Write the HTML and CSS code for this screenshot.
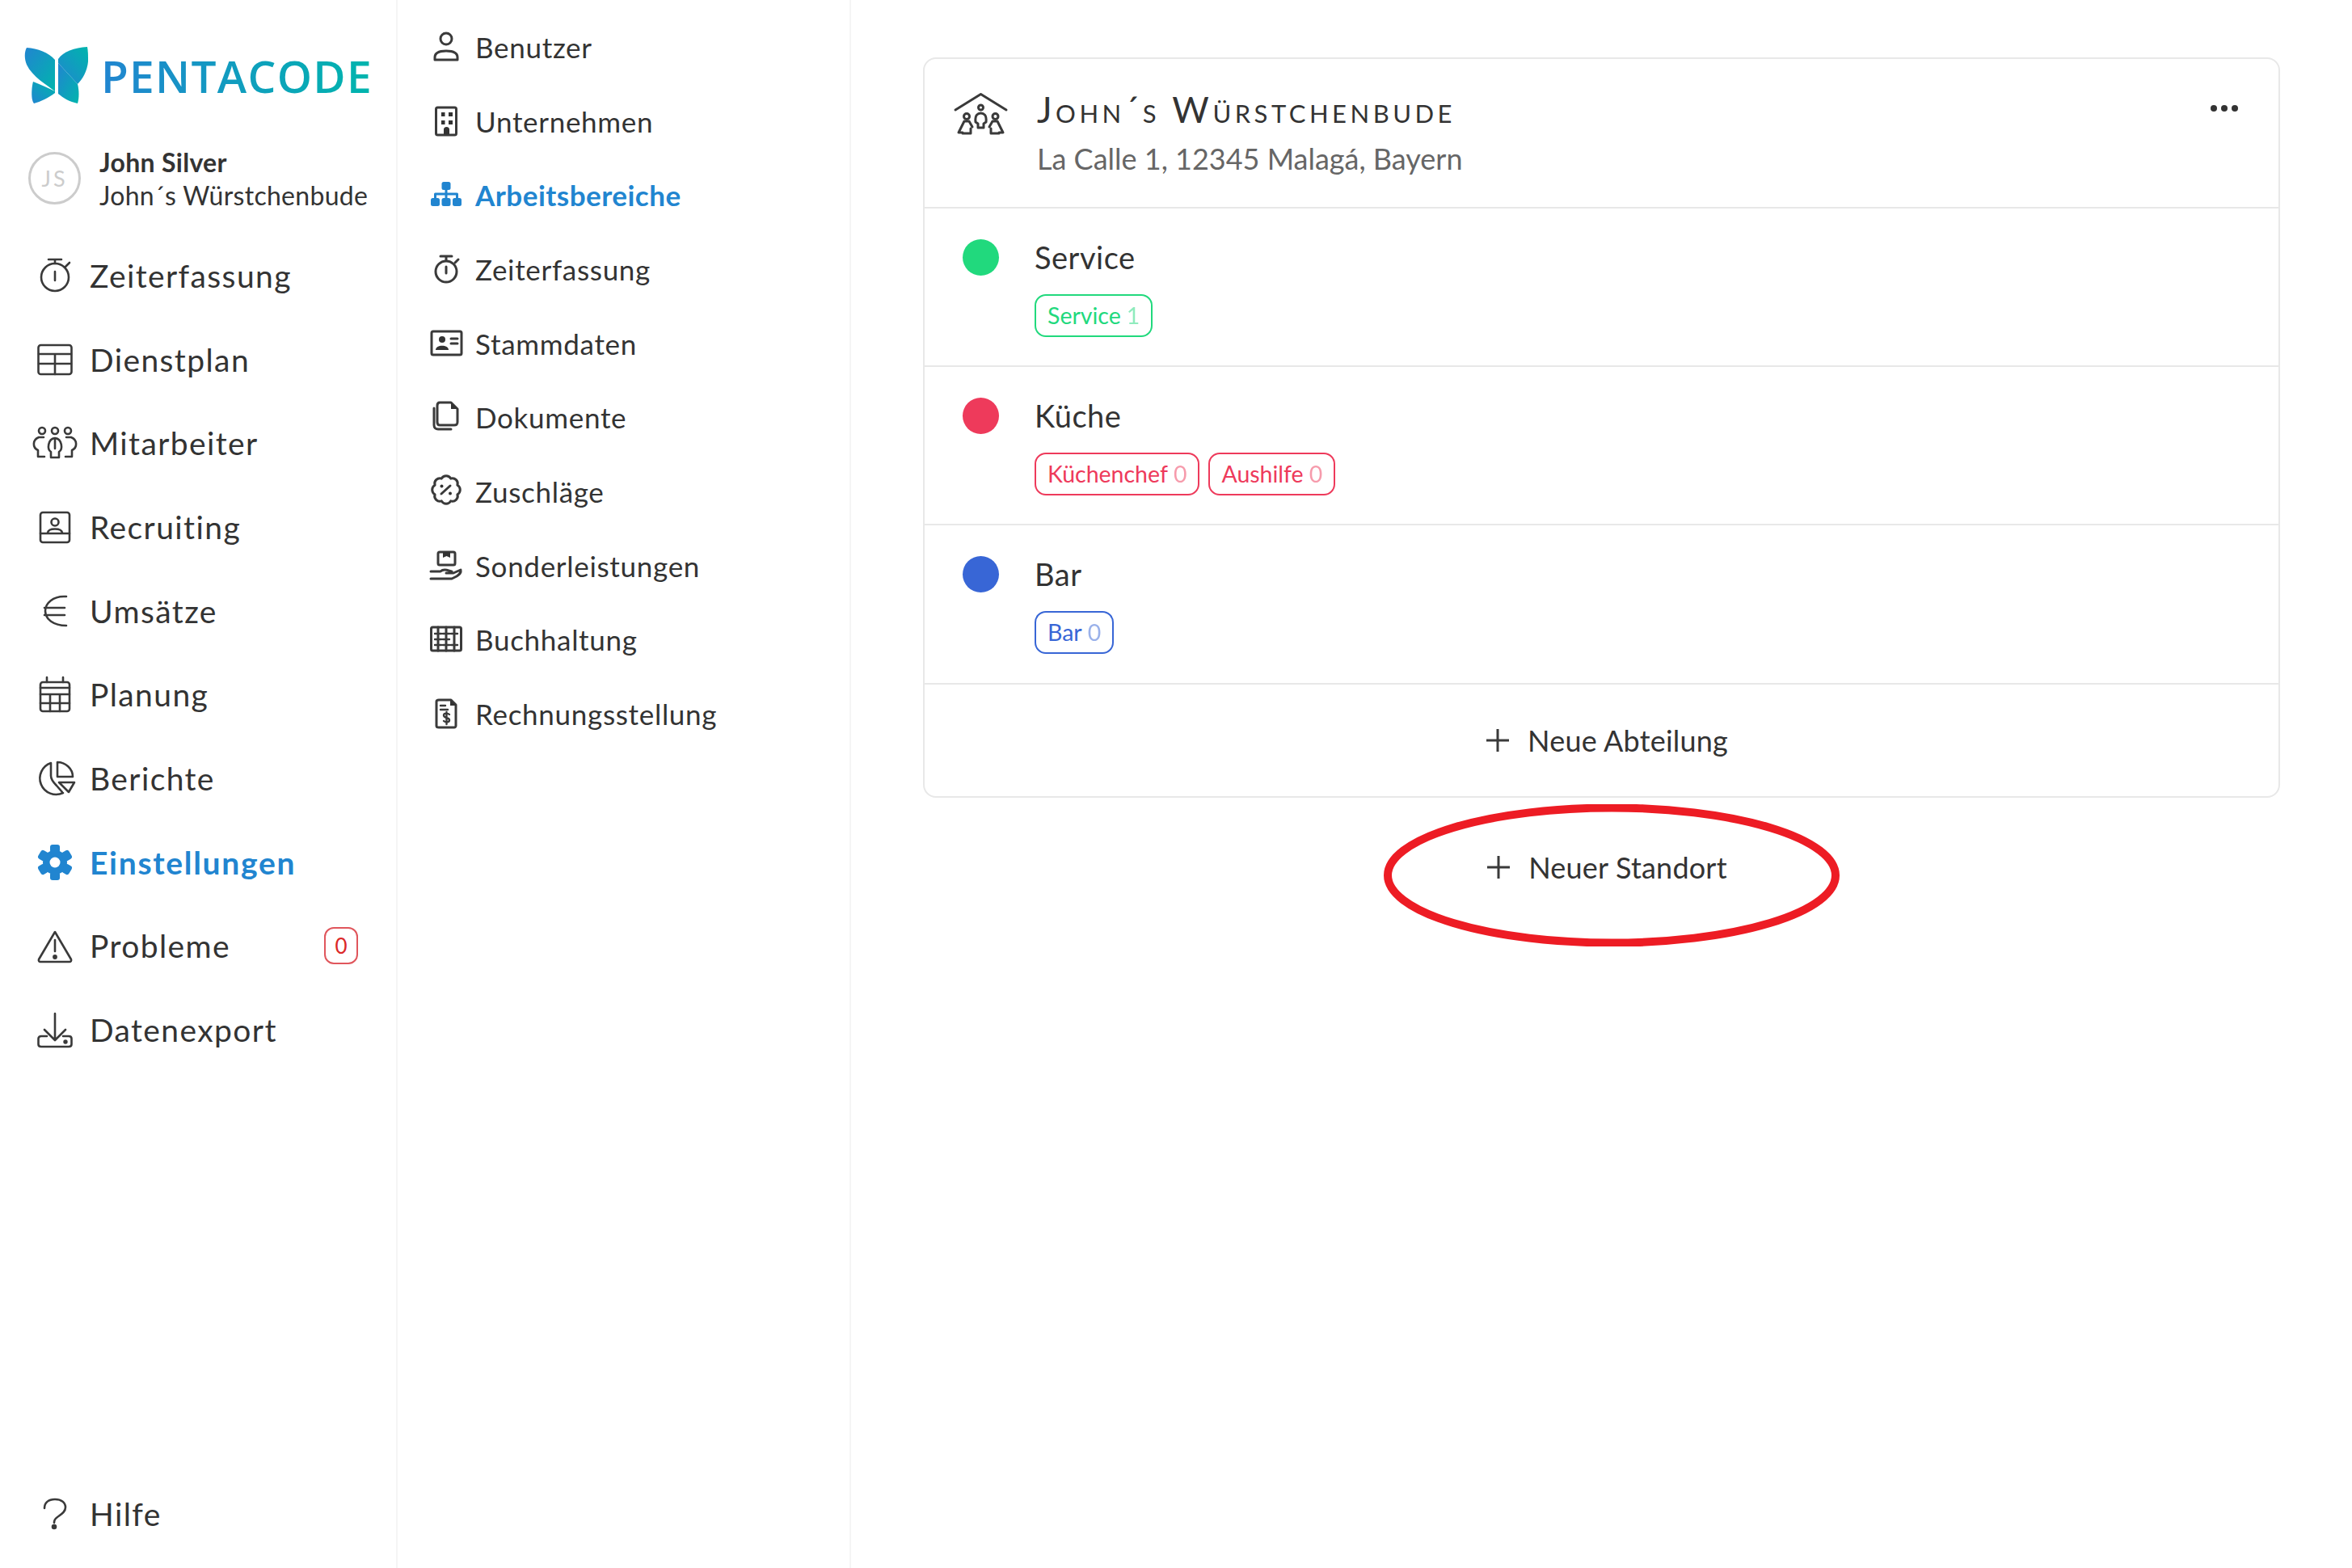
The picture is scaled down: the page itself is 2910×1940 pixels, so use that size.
FILE: index.html
```html
<!DOCTYPE html>
<html lang="de">
<head>
    <meta charset="UTF-8">
    <title>Arbeitsbereiche</title>
    <link rel="stylesheet" href="styles.css">
</head>
<body>

<div class="sidebar">
    <div class="logo">
        <svg class="logo-mark" viewBox="0 0 80 71">
            <defs>
                <linearGradient id="wingA" x1="0" y1="0" x2="1" y2="1">
                    <stop offset="0" stop-color="#2185d0"/>
                    <stop offset="1" stop-color="#00b5ad"/>
                </linearGradient>
                <linearGradient id="wingB" x1="0" y1="1" x2="1" y2="0">
                    <stop offset="0" stop-color="#2185d0"/>
                    <stop offset="1" stop-color="#00b5ad"/>
                </linearGradient>
            </defs>
            <path fill="url(#wingA)" d="M3 1 C17 2 30 7 38 16 V55 C28 47 10 37 3 22 C0 15 0 6 3 1 Z"/>
            <path fill="url(#wingB)" d="M78 0 C62 1 48 6 42 15 L42 20 L66 46 C72 40 78 30 79 18 C79 11 79 5 78 0 Z"/>
            <path fill="url(#wingB)" d="M11 43 C21 47 30 51 38 55 V57 C30 63 20 68 12 70 C8 66 9 50 11 43 Z"/>
            <path fill="url(#wingA)" d="M42 20 L66 46 C68 54 68 63 66 70 C56 68 48 63 42 58 Z"/>
        </svg>
        <span class="logo-text">PENTACODE</span>
    </div>

    <div class="user">
        <div class="avatar">JS</div>
        <div class="user-text">
            <div class="user-name">John Silver</div>
            <div class="user-company">John´s Würstchenbude</div>
        </div>
    </div>

    <nav class="main-nav">
        <a class="main-item">
            <svg class="icon" viewBox="0 0 44 44"><circle cx="22" cy="24" r="17"/><path d="M14 2H30M22 2V7M22 17V28M35 11L40 6"/></svg>
            <span>Zeiterfassung</span>
        </a>
        <a class="main-item">
            <svg class="icon" viewBox="0 0 44 44"><rect x="1.5" y="4" width="41" height="36" rx="3"/><path d="M2 15H42M2 27H42M22 15V40"/></svg>
            <span>Dienstplan</span>
        </a>
        <a class="main-item">
            <svg class="icon" viewBox="0 0 44 44"><circle cx="6" cy="7" r="4"/><circle cx="22" cy="7" r="4"/><circle cx="38" cy="7" r="4"/><path d="M17 33C12 30 13 17 22 16C31 17 32 30 27 33V40H17ZM22 16V29"/><path d="M8 15H2C-6 18-6 28 1 31V39H9"/><path d="M36 15H42C50 18 50 28 43 31V39H35"/></svg>
            <span>Mitarbeiter</span>
        </a>
        <a class="main-item">
            <svg class="icon" viewBox="0 0 44 44"><rect x="4" y="4" width="36" height="37" rx="3"/><circle cx="22" cy="16" r="4.5"/><path d="M13 29C14 23 30 23 31 29M4 30H40"/></svg>
            <span>Recruiting</span>
        </a>
        <a class="main-item">
            <svg class="icon" viewBox="0 0 44 44"><path d="M36 4H33C20 4 10 12 10 22C10 32 20 40 36 40M9 18H34M9 27H34"/></svg>
            <span>Umsätze</span>
        </a>
        <a class="main-item">
            <svg class="icon" viewBox="0 0 44 44"><rect x="4" y="7" width="36" height="36" rx="3"/><path d="M12 1V7M32 1V7M4 14H40M4 22H40M4 33H40M16 22V43M28 22V43"/></svg>
            <span>Planung</span>
        </a>
        <a class="main-item">
            <svg class="icon" viewBox="0 0 44 44"><path d="M17 3A20 20 0 1 0 32 40M17 3V19C17 24 21 28 24 31L31 39"/><path d="M25 2V20H44C44 10 35 2 25 2Z"/><path d="M27 27H46L39 39Z"/></svg>
            <span>Berichte</span>
        </a>
        <a class="main-item active">
            <svg class="icon icon-fill" viewBox="0 0 44 44">
                <circle cx="22" cy="22" r="15"/>
                <rect x="16" y="0" width="12" height="10" rx="3"/>
                <rect x="16" y="0" width="12" height="10" rx="3" transform="rotate(60 22 22)"/>
                <rect x="16" y="0" width="12" height="10" rx="3" transform="rotate(120 22 22)"/>
                <rect x="16" y="0" width="12" height="10" rx="3" transform="rotate(180 22 22)"/>
                <rect x="16" y="0" width="12" height="10" rx="3" transform="rotate(240 22 22)"/>
                <rect x="16" y="0" width="12" height="10" rx="3" transform="rotate(300 22 22)"/>
                <circle class="hole" cx="22" cy="22" r="6.5"/>
            </svg>
            <span>Einstellungen</span>
        </a>
        <a class="main-item">
            <svg class="icon" viewBox="0 0 44 44"><path d="M22 5L2 39C1.5 41 2.5 42 4 42H40C41.5 42 42.5 41 42 39Z"/><path d="M22 15V29"/><circle class="dot" cx="22" cy="36" r="1.6"/></svg>
            <span>Probleme</span>
            <span class="problem-count">0</span>
        </a>
        <a class="main-item">
            <svg class="icon" viewBox="0 0 44 44"><path d="M22 2V34M9 22L22 35L35 22"/><path d="M12 30H5C3 30 1.5 31 1.5 33V40C1.5 42 3 43 5 43H39C41 43 42.5 42 42.5 40V33C42.5 31 41 30 39 30H32"/><circle class="dot" cx="35" cy="37" r="1.4"/></svg>
            <span>Datenexport</span>
        </a>
    </nav>

    <a class="main-item help">
        <svg class="icon" viewBox="0 0 44 44"><path d="M9 15C9 8 14 4 22 4C30 4 35 8 35 14C35 20 29 23 25 26C22 28 21 30 21 33"/><circle class="dot" cx="21" cy="38" r="2"/></svg>
        <span>Hilfe</span>
    </a>
</div>

<div class="subnav">
    <a class="sub-item">
        <svg class="icon-sm" viewBox="0 0 40 40"><circle cx="20" cy="10" r="7"/><path d="M6 36V33C6 27 13 25 20 25C27 25 34 27 34 33V36Z"/></svg>
        <span>Benutzer</span>
    </a>
    <a class="sub-item">
        <svg class="icon-sm" viewBox="0 0 40 40"><rect x="7.5" y="3" width="25" height="34" rx="2"/><path class="solid" d="M14 9h4.500v5H14zM23 9h5v5h-5zM14 19h4.500v5H14zM23 19h5v5h-5zM17 36V30C17 26 24 26 24 30V36Z"/></svg>
        <span>Unternehmen</span>
    </a>
    <a class="sub-item active">
        <svg class="icon-sm icon-fill" viewBox="0 0 40 40">
            <rect x="14.500" y="4" width="11" height="10" rx="2.500"/>
            <rect x="1" y="24" width="11" height="10" rx="2.500"/>
            <rect x="14.500" y="24" width="11" height="10" rx="2.500"/>
            <rect x="28" y="24" width="11" height="10" rx="2.500"/>
            <path class="link" d="M20 13V25M6.500 25V19H33.500V25"/>
        </svg>
        <span>Arbeitsbereiche</span>
    </a>
    <a class="sub-item">
        <svg class="icon-sm" viewBox="0 0 40 40"><circle cx="20" cy="23" r="13"/><path d="M13 4H27M20 4V9M20 17V25M31 12L35 8"/></svg>
        <span>Zeiterfassung</span>
    </a>
    <a class="sub-item">
        <svg class="icon-sm" viewBox="0 0 40 40"><rect x="2" y="5" width="37" height="29" rx="2"/><circle class="solid" cx="15" cy="15" r="4"/><path class="solid" d="M7 28C7 21 23 21 23 28Z"/><path d="M26 14H34M26 20H34"/></svg>
        <span>Stammdaten</span>
    </a>
    <a class="sub-item">
        <svg class="icon-sm" viewBox="0 0 40 40"><path d="M12 2H26L34 10V26C34 29 33 30 30 30H12C10 30 9 29 9 26V6C9 3 10 2 12 2Z"/><path class="solid" d="M26 2L34 10H26Z"/><path d="M5 9V30C5 33 7 35 10 35H26"/></svg>
        <span>Dokumente</span>
    </a>
    <a class="sub-item">
        <svg class="icon-sm" viewBox="0 0 40 40"><path d="M14.300 4.100A6.500 6.500 0 0 1 25.700 4.100A6.500 6.500 0 0 1 33.900 12.300A6.500 6.500 0 0 1 33.900 23.700A6.500 6.500 0 0 1 25.700 31.900A6.500 6.500 0 0 1 14.300 31.900A6.500 6.500 0 0 1 6.100 23.700A6.500 6.500 0 0 1 6.100 12.300A6.500 6.500 0 0 1 14.300 4.100Z"/><path d="M14 23L25 13"/><circle class="solid" cx="14.500" cy="13.500" r="2"/><circle class="solid" cx="25" cy="22.500" r="2"/></svg>
        <span>Zuschläge</span>
    </a>
    <a class="sub-item">
        <svg class="icon-sm" viewBox="0 0 40 40"><rect x="10" y="3" width="21" height="16" rx="2"/><path class="solid" d="M16 3H25V10L20.500 8L16 10Z"/><path d="M1 27H13C18 22 24 27 27 27M20 29H29L38 25C39 29 36 31 33 33L27 36H1"/></svg>
        <span>Sonderleistungen</span>
    </a>
    <a class="sub-item">
        <svg class="icon-sm" viewBox="0 0 40 40"><rect x="1.500" y="5" width="37" height="29" rx="2"/><path d="M10 5V34M20 5V34M30 5V34"/><path class="thin" d="M6 13H14M16 13H24M26 13H34M6 20H14M16 20H24M6 27H14M16 27H24M26 27H34"/></svg>
        <span>Buchhaltung</span>
    </a>
    <a class="sub-item">
        <svg class="icon-sm" viewBox="0 0 40 40"><path d="M11 3H26L32 9V35C32 36 31 37 30 37H11C9 37 8 36 8 35V5C8 4 9 3 11 3Z"/><path class="solid" d="M25 3L32 10H25Z"/><path class="thin" d="M13 10H19M13 15H22M24 21C22 19 17 19 17 22C17 26 24 24 24 28C24 31 19 31 17 29M20.500 18V33"/></svg>
        <span>Rechnungsstellung</span>
    </a>
</div>

<div class="content">
    <div class="card">
        <div class="card-head">
            <svg class="place-icon" viewBox="0 0 65 52">
                <path d="M1 21L32.500 1.500L64 21"/>
                <circle cx="32.500" cy="18" r="3"/>
                <circle cx="15" cy="29" r="3.500"/>
                <circle cx="50.500" cy="29" r="3.500"/>
                <path d="M26 36C25 27 29 25 32.500 25C36 25 40 27 39 36L36 38V43H29V38Z"/>
                <path d="M22 42L18 35H12L5 49H10V50H20V44"/>
                <path d="M43 42L47 35H53L60 49H55V50H45V44"/>
            </svg>
            <div class="place-text">
                <div class="place-name">John´s Würstchenbude</div>
                <div class="place-address">La Calle 1, 12345 Malagá, Bayern</div>
            </div>
            <div class="more"><i></i><i></i><i></i></div>
        </div>

        <div class="dept green">
            <span class="dept-dot"></span>
            <div>
                <div class="dept-name">Service</div>
                <div class="tags">
                    <span class="tag">Service <b>1</b></span>
                </div>
            </div>
        </div>
        <div class="dept red">
            <span class="dept-dot"></span>
            <div>
                <div class="dept-name">Küche</div>
                <div class="tags">
                    <span class="tag">Küchenchef <b>0</b></span>
                    <span class="tag">Aushilfe <b>0</b></span>
                </div>
            </div>
        </div>
        <div class="dept blue">
            <span class="dept-dot"></span>
            <div>
                <div class="dept-name">Bar</div>
                <div class="tags">
                    <span class="tag">Bar <b>0</b></span>
                </div>
            </div>
        </div>

        <a class="add-row">
            <svg class="plus" viewBox="0 0 28 28"><path d="M14 0V28M0 14H28"/></svg>
            Neue Abteilung
        </a>
    </div>

    <div class="new-place">
        <a class="add-row">
            <svg class="plus" viewBox="0 0 28 28"><path d="M14 0V28M0 14H28"/></svg>
            Neuer Standort
        </a>
        <svg class="marker" viewBox="0 0 564 176"><ellipse cx="282" cy="88" rx="277" ry="83.500"/></svg>
    </div>
</div>

</body>
</html>
```

FILE: styles.css
```css
* {
    box-sizing: border-box;
}
html, body {
    height: 100%;
}
body {
    margin: 0;
    display: flex;
    min-height: 1940px;
    font-family: "Lato", "Open Sans", sans-serif;
    color: #333;
    background-color: #fff;
}
a {
    color: inherit;
    text-decoration: none;
}

/* first column */
.sidebar {
    width: 492px;
    flex: none;
    display: flex;
    flex-direction: column;
    border-right: 2px solid #f5f5f5;
}
.logo {
    display: flex;
    align-items: center;
    gap: 15px;
    padding: 58px 0 0 30px;
    height: 129px;
}
.logo-mark {
    width: 80px;
    height: 71px;
    flex: none;
}
.logo-text {
    font-family: "Open Sans", sans-serif;
    font-weight: 600;
    font-size: 55px;
    line-height: 71px;
    letter-spacing: 1.3px;
    background: linear-gradient(90deg, #2185d0, #00b5ad);
    -webkit-background-clip: text;
    background-clip: text;
    color: transparent;
}
.user {
    display: flex;
    align-items: center;
    gap: 23px;
    margin-top: 59px;
    padding-left: 35px;
    height: 65px;
}
.avatar {
    width: 65px;
    height: 65px;
    flex: none;
    display: flex;
    align-items: center;
    justify-content: center;
    border: 3px solid #ccc;
    border-radius: 50%;
    color: #ccc;
    font-size: 27px;
    letter-spacing: 3px;
}
.user-text {
    font-size: 32px;
    line-height: 41px;
    letter-spacing: 0.3px;
    white-space: nowrap;
}
.user-name {
    font-weight: 700;
}
.main-nav {
    margin-top: 36px;
}
.main-item {
    display: flex;
    align-items: center;
    gap: 21px;
    height: 103.7px;
    padding-left: 46px;
    font-size: 39px;
    letter-spacing: 1.4px;
}
.main-item.active {
    color: #2185d0;
    font-weight: 700;
    letter-spacing: 1.7px;
}
.help {
    margin-top: auto;
    margin-bottom: 15px;
}
.icon,
.icon-sm,
.place-icon,
.plus {
    flex: none;
    overflow: visible;
    fill: none;
    stroke: #3a3a3a;
    stroke-width: 2.6;
    stroke-linecap: round;
    stroke-linejoin: round;
}
.icon {
    width: 44px;
    height: 44px;
}
.icon .dot {
    fill: #3a3a3a;
}
.icon-sm {
    width: 40px;
    height: 40px;
    stroke-width: 3;
}
.icon-sm .solid {
    fill: #333;
    stroke: none;
}
.icon-sm .thin {
    stroke-width: 2.4;
}
.icon-fill {
    fill: #2185d0;
    stroke: none;
}
.icon-fill .hole {
    fill: #fff;
}
.icon-fill .link {
    fill: none;
    stroke: #2185d0;
    stroke-width: 3;
}
.place-icon {
    stroke-width: 3;
}
.problem-count {
    margin-left: auto;
    margin-right: 47px;
    width: 42px;
    height: 46px;
    display: flex;
    align-items: center;
    justify-content: center;
    border: 2px solid #e0565c;
    border-radius: 12px;
    color: #db2828;
    font-size: 26px;
    letter-spacing: 0;
}

/* second column */
.subnav {
    width: 561px;
    flex: none;
    padding: 12px 0 0 40px;
    border-right: 2px solid #f5f5f5;
}
.sub-item {
    display: flex;
    align-items: center;
    gap: 16px;
    height: 91.7px;
    font-size: 35px;
    letter-spacing: 0.7px;
}
.sub-item.active {
    color: #2185d0;
    font-weight: 700;
    letter-spacing: 0.5px;
}

/* locations */
.content {
    flex: 1;
    padding: 71px 89px 0 89px;
}
.card {
    border: 2px solid #e8e8e8;
    border-radius: 16px;
}
.card-head {
    display: flex;
    align-items: flex-start;
    height: 185px;
    padding: 39px 50px 0 37px;
    border-bottom: 2px solid #e8e8e8;
}
.place-icon {
    width: 65px;
    height: 52px;
    margin-top: 3px;
    margin-right: 37px;
}
.place-name {
    font-size: 44px;
    line-height: 46px;
    font-variant: small-caps;
    letter-spacing: 4.5px;
}
.place-address {
    margin-top: 15px;
    font-size: 36px;
    line-height: 46px;
    color: #666;
}
.more {
    margin-left: auto;
    margin-top: 18px;
    display: flex;
    gap: 5px;
}
.more i {
    width: 8px;
    height: 8px;
    border-radius: 50%;
    background-color: #333;
}
.dept {
    display: flex;
    gap: 44px;
    height: 196.200px;
    padding: 38px 0 0 47px;
    border-bottom: 2px solid #e8e8e8;
}
.dept-dot {
    width: 45px;
    height: 45px;
    flex: none;
    border-radius: 50%;
}
.dept-name {
    font-size: 38px;
    line-height: 45px;
    letter-spacing: 0.5px;
}
.tags {
    display: flex;
    gap: 11px;
    margin-top: 23px;
}
.tag {
    height: 53px;
    padding: 0 14px 2px;
    display: flex;
    align-items: center;
    gap: 7px;
    border: 2px solid;
    border-radius: 14px;
    font-size: 28.500px;
}
.tag b {
    font-weight: 400;
    opacity: 0.5;
}
.green .dept-dot { background-color: #21d97d; }
.green .tag { color: #21d97d; }
.red .dept-dot { background-color: #ee3a5b; }
.red .tag { color: #ee3a5b; }
.blue .dept-dot { background-color: #3866d6; }
.blue .tag { color: #3866d6; }

.add-row {
    display: flex;
    align-items: center;
    justify-content: center;
    gap: 23px;
    height: 138px;
    padding-left: 14px;
    font-size: 36px;
    letter-spacing: 0.2px;
}
.plus {
    width: 28px;
    height: 28px;
    stroke-width: 3;
    stroke-linecap: butt;
}
.new-place {
    position: relative;
    height: 174px;
}
.new-place .add-row {
    height: 172px;
}
.marker {
    position: absolute;
    left: calc(50% - 270px);
    top: 8px;
    width: 564px;
    height: 176px;
    fill: none;
    stroke: #ed1c24;
    stroke-width: 10;
    pointer-events: none;
}
```
